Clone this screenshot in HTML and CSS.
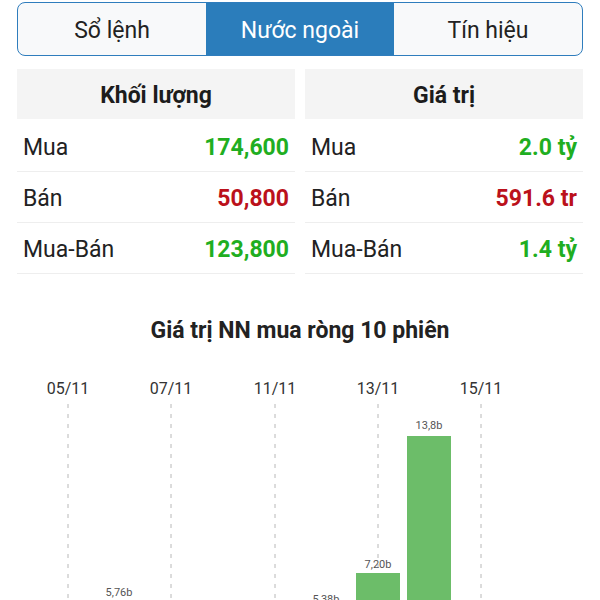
FILE: index.html
```html
<!DOCTYPE html>
<html lang="vi">
<head>
<meta charset="utf-8">
<title>Nước ngoài</title>
<link rel="stylesheet" href="styles.css">
</head>
<body>
<div class="wrap">
  <div class="tabs">
    <div class="tab">Sổ lệnh</div>
    <div class="tab active">Nước ngoài</div>
    <div class="tab">Tín hiệu</div>
  </div>
  <div class="stats">
    <div class="col">
      <div class="head">Khối lượng</div>
      <div class="rows">
        <div class="row"><span class="lbl">Mua</span><span class="val up">174,600</span></div>
        <div class="row"><span class="lbl">Bán</span><span class="val down">50,800</span></div>
        <div class="row"><span class="lbl">Mua-Bán</span><span class="val up">123,800</span></div>
      </div>
    </div>
    <div class="col">
      <div class="head">Giá trị</div>
      <div class="rows">
        <div class="row"><span class="lbl">Mua</span><span class="val up">2.0 tỷ</span></div>
        <div class="row"><span class="lbl">Bán</span><span class="val down">591.6 tr</span></div>
        <div class="row"><span class="lbl">Mua-Bán</span><span class="val up">1.4 tỷ</span></div>
      </div>
    </div>
  </div>
</div>
<div class="chart">
  <div class="chart-title">Giá trị NN mua ròng 10 phiên</div>
  <svg class="chart-svg" width="600" height="256" viewBox="0 0 600 256">
    <g class="grid">
      <line x1="68" y1="59" x2="68" y2="256"/>
      <line x1="171" y1="59" x2="171" y2="256"/>
      <line x1="275" y1="59" x2="275" y2="256"/>
      <line x1="378" y1="59" x2="378" y2="256"/>
      <line x1="481" y1="59" x2="481" y2="256"/>
    </g>
    <g class="dates">
      <text x="68" y="49">05/11</text>
      <text x="171" y="49">07/11</text>
      <text x="275" y="49">11/11</text>
      <text x="378" y="49">13/11</text>
      <text x="481" y="49">15/11</text>
    </g>
    <g class="bars">
      <rect x="97" y="258" width="44" height="40"/>
      <rect x="304" y="266" width="44" height="40"/>
      <rect x="356" y="228" width="44" height="60"/>
      <rect x="407" y="91" width="44" height="200"/>
    </g>
    <g class="vals">
      <text x="119" y="251">5,76b</text>
      <text x="326" y="258">5,38b</text>
      <text x="378" y="223">7,20b</text>
      <text x="429" y="84">13,8b</text>
    </g>
  </svg>
</div>
</body>
</html>
```
FILE: styles.css
```css
html, body {
  margin: 0;
  padding: 0;
  background: #ffffff;
  overflow: hidden;
  height: 600px;
}
body {
  font-family: Roboto, "Noto Sans", "Liberation Sans", sans-serif;
  color: #222222;
}
.wrap {
  padding: 2px 17px 0 17px;
}
.tabs {
  display: flex;
  height: 54px;
  box-sizing: border-box;
  border: 1.5px solid #2f7dbd;
  border-radius: 8px;
  overflow: hidden;
  background: #f8f9fa;
}
.tab {
  flex: 1;
  display: flex;
  align-items: center;
  justify-content: center;
  font-size: 23px;
  color: #222222;
  padding-top: 3px;
}
.tab.active {
  background: #2b7dbb;
  color: #ffffff;
}
.stats {
  display: grid;
  grid-template-columns: 1fr 1fr;
  column-gap: 10px;
  margin-top: 13px;
}
.head {
  height: 50px;
  box-sizing: border-box;
  padding-top: 2px;
  background: #f4f4f4;
  display: flex;
  align-items: center;
  justify-content: center;
  font-size: 23px;
  font-weight: 700;
  color: #1c1c1c;
}
.rows {
  margin-top: 2px;
}
.row {
  border-bottom: 1px solid #eeeeee;
  display: flex;
  align-items: center;
  justify-content: space-between;
  padding: 2px 6px 0 6px;
  box-sizing: border-box;
  height: 51px;
}
.lbl {
  font-size: 23px;
  color: #222222;
}
.val {
  font-size: 23px;
  font-weight: 700;
}
.up { color: #1fae21; }
.down { color: #bb111b; }
.chart {
  margin-top: 42px;
}
.chart-title {
  height: 29px;
  line-height: 29px;
  text-align: center;
  font-size: 23px;
  font-weight: 700;
  color: #222222;
}
.chart-svg {
  display: block;
}
.grid line {
  stroke: #b8b8b8;
  stroke-width: 1;
  stroke-dasharray: 4 6;
}
.dates text {
  font-family: Roboto, sans-serif;
  font-size: 16px;
  fill: #333333;
  text-anchor: middle;
}
.bars rect {
  fill: #6cbd69;
}
.vals text {
  font-family: Roboto, sans-serif;
  font-size: 11px;
  fill: #555555;
  text-anchor: middle;
}
```
